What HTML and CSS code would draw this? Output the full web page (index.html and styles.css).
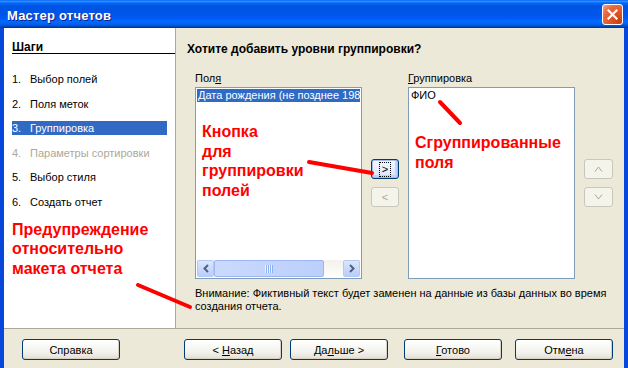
FILE: index.html
```html
<!DOCTYPE html>
<html lang="ru">
<head>
    <meta charset="UTF-8">
    <meta name="viewport" content="width=device-width, initial-scale=1.0">
    <title>Мастер отчетов</title>
    <link rel="stylesheet" href="styles.css">
</head>
<body>
    <div class="window">
        <div class="titlebar">
            <span class="title">Мастер отчетов</span>
            <span class="close">
                <svg width="11" height="11" viewBox="0 0 11 11"><path d="M1.5 1.5 L9.5 9.5 M9.5 1.5 L1.5 9.5" stroke="#fff" stroke-width="2.2" stroke-linecap="square"/></svg>
            </span>
        </div>

        <div class="body">
            <div class="main">
                <div class="steps">
                    <div class="steps-head">Шаги</div>
                    <ul class="step-list">
                        <li><span class="num">1.</span>Выбор полей</li>
                        <li><span class="num">2.</span>Поля меток</li>
                        <li class="current"><span class="num">3.</span>Группировка</li>
                        <li class="disabled"><span class="num">4.</span>Параметры сортировки</li>
                        <li><span class="num">5.</span>Выбор стиля</li>
                        <li><span class="num">6.</span>Создать отчет</li>
                    </ul>
                    <div class="remark">Предупреждение<br>относительно<br>макета отчета</div>
                </div>

                <div class="page">
                    <div class="question">Хотите добавить уровни группировки?</div>
                    <div class="panes">
                        <div class="pane">
                            <div class="label">Пол<u>я</u></div>
                            <div class="listbox">
                                <div class="item selected">Дата рождения (не позднее 198</div>
                                <div class="remark in-list">Кнопка<br>для<br>группировки<br>полей</div>
                                <div class="hscroll">
                                    <span class="sb-btn">
                                        <svg width="8" height="9" viewBox="0 0 8 9"><path d="M6 1 L2.5 4.5 L6 8" fill="none" stroke="#4d6185" stroke-width="2"/></svg>
                                    </span>
                                    <span class="sb-thumb"><span class="grip"></span></span>
                                    <span class="sb-track"></span>
                                    <span class="sb-btn">
                                        <svg width="8" height="9" viewBox="0 0 8 9"><path d="M2 1 L5.5 4.5 L2 8" fill="none" stroke="#4d6185" stroke-width="2"/></svg>
                                    </span>
                                </div>
                            </div>
                        </div>

                        <div class="side-btns">
                            <button class="small default"><span class="focus">&gt;</span></button>
                            <button class="small" disabled>&lt;</button>
                        </div>

                        <div class="pane">
                            <div class="label"><u>Г</u>руппировка</div>
                            <div class="listbox">
                                <div class="item">ФИО</div>
                                <div class="remark in-group">Сгруппированные<br>поля</div>
                            </div>
                        </div>

                        <div class="side-btns">
                            <button class="small" disabled>
                                <svg width="9" height="6" viewBox="0 0 9 6"><path d="M1 5.5 L4.5 1 L8 5.5" fill="none" stroke="#aca899" stroke-width="1"/></svg>
                            </button>
                            <button class="small" disabled>
                                <svg width="9" height="6" viewBox="0 0 9 6"><path d="M1 0.5 L4.5 5 L8 0.5" fill="none" stroke="#aca899" stroke-width="1"/></svg>
                            </button>
                        </div>
                    </div>
                    <p class="warning">Внимание: Фиктивный текст будет заменен на данные из базы данных во время<br>создания отчета.</p>
                </div>
            </div>

            <div class="footer">
                <button class="btn help"><span>Справка</span></button>
                <button class="btn back"><span>&lt; <u>Н</u>азад</span></button>
                <button class="btn next"><span>Да<u>л</u>ьше &gt;</span></button>
                <button class="btn finish"><span><u>Г</u>отово</span></button>
                <button class="btn cancel"><span>Отм<u>е</u>на</span></button>
            </div>
        </div>

        <!-- red pointer strokes drawn over the dialog -->
        <svg class="marks" width="628" height="368" viewBox="0 0 628 368">
            <g stroke="#ff0000" stroke-width="4" stroke-linecap="round">
                <line x1="309" y1="162" x2="372" y2="173"/>
                <line x1="440" y1="102" x2="460" y2="123"/>
                <line x1="138" y1="285" x2="190" y2="307"/>
            </g>
        </svg>
    </div>
</body>
</html>
```

FILE: styles.css
```css
body {
    margin: 0;
    font-family: "Liberation Sans", Arial, sans-serif;
    font-size: 11px;
    color: #000;
    background: #fff;
}
.window {
    position: relative;
    width: 628px;
    height: 368px;
    display: flex;
    flex-direction: column;
    overflow: hidden;
}
.titlebar {
    height: 28px;
    flex: none;
    display: flex;
    align-items: center;
    justify-content: space-between;
    padding: 0 5px 0 7px;
    box-sizing: border-box;
    background: linear-gradient(to bottom, #0058ee 0%, #3593ff 4%, #288eff 6%, #127dff 8%, #036ffc 10%, #0262ee 14%, #0057e5 20%, #0054e3 24%, #0055eb 56%, #005bf5 66%, #026afe 76%, #0062ef 86%, #0052d6 92%, #0040ab 96%, #003092 100%);
}
.title {
    color: #fff;
    font-weight: bold;
    font-size: 13px;
    letter-spacing: 0.2px;
    text-shadow: 1px 1px #0f1f8a;
    padding-top: 2px;
}
.close {
    width: 21px;
    height: 21px;
    box-sizing: border-box;
    border: 1px solid #fff;
    border-radius: 3px;
    display: flex;
    align-items: center;
    justify-content: center;
    background: radial-gradient(circle at 85% 85%, #c9400f 0%, #e1582c 45%, #e76a43 70%, #f3a890 100%);
    margin-top: 1px;
}
.body {
    flex: 1;
    display: flex;
    flex-direction: column;
    background: #ece9d8;
    border-left: 4px solid #0847db;
    border-right: 4px solid #0847db;
}
.main {
    height: 300px;
    display: flex;
    border-bottom: 1px solid #aca899;
}
.steps {
    width: 172px;
    box-sizing: border-box;
    background: #fff;
    border-right: 1px solid #aca899;
    padding-top: 13px;
}
.steps-head {
    margin-left: 8px;
    font-weight: bold;
    font-size: 12px;
    line-height: 12px;
    border-bottom: 1px solid #000;
}
.step-list {
    list-style: none;
    margin: 18px 0 0 8px;
    padding: 0;
}
.step-list li {
    width: 155px;
    height: 14px;
    line-height: 14px;
    margin-bottom: 10.6px;
    white-space: nowrap;
}
.step-list .num {
    display: inline-block;
    width: 18px;
}
.step-list .current {
    background: #316ac5;
    color: #fff;
}
.step-list .disabled {
    color: #aca899;
}
.remark {
    color: #ff0000;
    font-weight: bold;
    font-size: 16px;
    line-height: 19.5px;
}
.steps .remark {
    margin: 8px 0 0 8px;
}
.page {
    flex: 1;
    padding: 14px 0 0 11px;
}
.question {
    font-weight: bold;
    font-size: 12px;
    line-height: 14px;
}
.panes {
    display: flex;
    margin: 16px 0 0 8px;
}
.pane {
    width: 167px;
}
.label {
    height: 13px;
    line-height: 13px;
    margin-bottom: 2px;
}
.listbox {
    height: 192px;
    box-sizing: border-box;
    border: 1px solid #7f9db9;
    background: #fff;
    padding: 1px;
    display: flex;
    flex-direction: column;
    overflow: hidden;
}
.item {
    height: 13px;
    line-height: 13px;
    padding-left: 1px;
    white-space: nowrap;
    overflow: hidden;
}
.item.selected {
    background: #316ac5;
    color: #fff;
}
.in-list {
    margin: 20px 0 0 5px;
}
.in-group {
    margin: 31px 0 0 5px;
}
.hscroll {
    margin-top: auto;
    height: 17px;
    display: flex;
    background: linear-gradient(to bottom, #f3f1ec, #fefefb);
}
.sb-btn {
    width: 17px;
    box-sizing: border-box;
    border: 1px solid #b4c8f6;
    border-radius: 2px;
    background: linear-gradient(to bottom, #dbe6fd, #b9cdfb);
    display: flex;
    align-items: center;
    justify-content: center;
}
.sb-thumb {
    width: 110px;
    box-sizing: border-box;
    border: 1px solid #9db5f2;
    border-radius: 2px;
    background: linear-gradient(to right, #c9dafd, #bccffb);
    display: flex;
    align-items: center;
    justify-content: center;
}
.grip {
    width: 8px;
    height: 8px;
    background: repeating-linear-gradient(90deg, #eef4fe 0 1px, #8cb0f8 1px 2px);
}
.sb-track {
    flex: 1;
}
.side-btns {
    width: 28px;
    margin: 0 9px 0 9px;
    padding-top: 87px;
    display: flex;
    flex-direction: column;
    gap: 8px;
}
.side-btns:last-child {
    width: 29px;
    margin-right: 0;
}
button {
    font-family: "Liberation Sans", Arial, sans-serif;
    font-size: 11px;
    color: #000;
    border: 1px solid #003c74;
    border-radius: 3px;
    background: linear-gradient(to bottom, #ffffff 0%, #f4f3ee 60%, #e3e0d4 100%);
    box-shadow: inset -1px -1px 0 #d6d0c5;
    padding: 0;
    box-sizing: border-box;
    display: flex;
    align-items: center;
    justify-content: center;
}
.small {
    width: 100%;
    height: 20px;
}
.small.default {
    background: linear-gradient(to bottom, #f6f9ff 0%, #d9e4fb 100%);
    box-shadow: inset 0 0 0 1px #a6bdf1, inset -1px -1px 0 2px #c3d3fb;
}
.focus {
    width: 10px;
    height: 13px;
    line-height: 13px;
    border: 1px dotted #000;
    text-align: center;
}
button:disabled {
    border-color: #c9c7ba;
    background: #f5f4ea;
    box-shadow: none;
    color: #aca899;
}
.warning {
    margin: 8px 0 0 8px;
    line-height: 13px;
}
.footer {
    flex: 1;
    display: flex;
    align-items: flex-start;
    padding: 10px 0 0 18px;
}
.btn {
    width: 98px;
    height: 21px;
}
.back {
    margin-left: 64px;
}
.next {
    margin-left: 8px;
}
.finish {
    margin-left: 16px;
}
.cancel {
    margin-left: 13px;
}
.marks {
    position: absolute;
    left: 0;
    top: 0;
    pointer-events: none;
}
```
